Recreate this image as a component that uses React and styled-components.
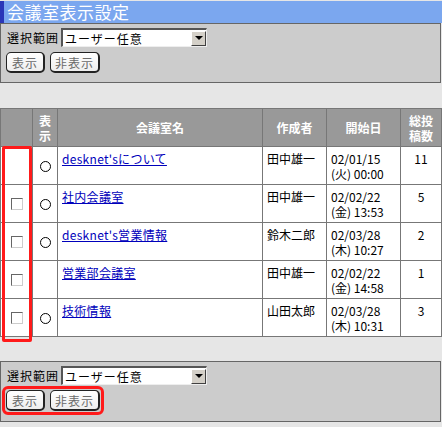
import React from "react";
import styled, { createGlobalStyle } from "styled-components";

const GlobalStyle = createGlobalStyle`
  html, body {
    margin: 0;
    padding: 0;
    background: #e6e6e6;
  }
  body {
    font-family: "Noto Sans CJK JP", "DejaVu Sans", sans-serif;
    font-size: 12px;
    color: #000;
  }
`;

const Page = styled.div`
  width: 442px;
  height: 427px;
  overflow: hidden;
  background: #e6e6e6;
`;

const TitleBar = styled.div`
  margin-top: 1px;
  height: 22px;
  display: flex;
  align-items: center;
  background: #7ba7ef;
  border-left: 4px solid #2a36b8;
  padding-left: 3px;
  color: #fff;
  font-size: 17px;
  line-height: 22px;
  letter-spacing: 0.5px;
`;

const Panel = styled.div`
  box-sizing: border-box;
  width: 441px;
  height: ${(p) => p.h}px;
  background: #cccccc;
  border: 1px solid #666;
  padding: 4px 0 0 4px;
  display: flex;
  flex-direction: column;
  gap: 5px;
`;

const Row = styled.div`
  display: flex;
  align-items: center;
  gap: 2px;
`;

const Label = styled.span`
  padding-left: 2px;
  font-size: 12px;
  letter-spacing: 1px;
`;

const SelectBox = styled.div`
  box-sizing: border-box;
  width: 146px;
  height: 19px;
  background: #fff;
  border-top: 2px solid #555;
  border-left: 2px solid #555;
  border-bottom: 1px solid #eee;
  border-right: 1px solid #eee;
  display: flex;
  align-items: center;
  justify-content: space-between;
  padding-left: 2px;
  font-size: 12px;
  letter-spacing: 1px;
`;

const Arrow = styled.span`
  box-sizing: border-box;
  width: 15px;
  height: 15px;
  background: #d4d0c8;
  border-top: 1px solid #fff;
  border-left: 1px solid #fff;
  border-bottom: 1px solid #404040;
  border-right: 1px solid #404040;
  display: flex;
  align-items: center;
  justify-content: center;
  &::after {
    content: "";
    border-left: 4px solid transparent;
    border-right: 4px solid transparent;
    border-top: 4px solid #000;
  }
`;

const Buttons = styled.div`
  display: flex;
  gap: 5px;
  align-self: flex-start;
  margin-left: 1px;
  border-radius: 2px;
  outline: ${(p) => (p.marked ? "3px solid #ff1a1a" : "none")};
  outline-offset: 1px;
`;

const Button = styled.button`
  box-sizing: border-box;
  height: 21px;
  padding: 0 4px;
  min-width: 39px;
  background: linear-gradient(#ffffff, #eeeeee);
  border: 1px solid #222;
  border-right-width: 2px;
  border-bottom-width: 2px;
  border-radius: 5px;
  font-family: inherit;
  font-size: 12px;
  color: #6a6a6a;
  letter-spacing: 1px;
  cursor: pointer;
`;

const Spacer = styled.div`
  height: ${(p) => p.h}px;
`;

const TableWrap = styled.div`
  position: relative;
  width: 441px;
`;

const Table = styled.table`
  width: 441px;
  table-layout: fixed;
  border-collapse: collapse;
  background: #fff;
`;

const Th = styled.th`
  background: #999999;
  color: #fff;
  font-weight: bold;
  font-size: 12px;
  line-height: 15px;
  height: 37px;
  border: 1px solid #777;
  text-align: center;
  padding: 0 2px;
`;

const Td = styled.td`
  border: 1px solid #777;
  height: 38px;
  box-sizing: border-box;
  padding: ${(p) => (p.mid ? "0" : p.center ? "4px 0 0 0" : "4px 0 0 4px")};
  vertical-align: ${(p) => (p.mid ? "middle" : "top")};
  text-align: ${(p) => (p.center ? "center" : "left")};
  font-size: 12px;
  line-height: 15px;
`;

const Link = styled.a`
  color: #0000bb;
  text-decoration: underline;
  letter-spacing: 0.3px;
`;

const Radio = styled.span`
  display: inline-block;
  width: 9px;
  height: 9px;
  border: 1px solid #000;
  border-radius: 50%;
  margin-top: 3px;
`;

const Check = styled.span`
  display: inline-block;
  box-sizing: border-box;
  width: 12px;
  height: 12px;
  background: #fff;
  border-top: 1px solid #666;
  border-left: 1px solid #666;
  border-bottom: 1px solid #ccc;
  border-right: 1px solid #ccc;
  margin-top: 2px;
`;

const Highlight = styled.div`
  position: absolute;
  left: 2px;
  top: 38px;
  width: 30px;
  height: 196px;
  box-sizing: border-box;
  border: 3px solid #ff1a1a;
  border-radius: 2px;
  pointer-events: none;
`;

const rooms = [
  { name: "desknet'sについて", author: "田中雄一", date: "02/01/15", time: "(火) 00:00", count: 11, check: false, radio: true },
  { name: "社内会議室", author: "田中雄一", date: "02/02/22", time: "(金) 13:53", count: 5, check: true, radio: true },
  { name: "desknet's営業情報", author: "鈴木二郎", date: "02/03/28", time: "(木) 10:27", count: 2, check: true, radio: true },
  { name: "営業部会議室", author: "田中雄一", date: "02/02/22", time: "(金) 14:58", count: 1, check: true, radio: false },
  { name: "技術情報", author: "山田太郎", date: "02/03/28", time: "(木) 10:31", count: 3, check: true, radio: true },
];

const RangeControls = ({ marked }) => (
  <>
    <Row>
      <Label>選択範囲</Label>
      <SelectBox>
        ユーザー任意
        <Arrow />
      </SelectBox>
    </Row>
    <Buttons marked={marked}>
      <Button>表示</Button>
      <Button>非表示</Button>
    </Buttons>
  </>
);

const App = () => (
  <Page>
    <GlobalStyle />
    <TitleBar>会議室表示設定</TitleBar>
    <Panel h={60}>
      <RangeControls />
    </Panel>
    <Spacer h={25} />
    <TableWrap>
      <Table>
        <colgroup>
          <col style={{ width: 32 }} />
          <col style={{ width: 25 }} />
          <col style={{ width: 205 }} />
          <col style={{ width: 64 }} />
          <col style={{ width: 74 }} />
          <col style={{ width: 41 }} />
        </colgroup>
        <thead>
          <tr>
            <Th />
            <Th>表<br />示</Th>
            <Th>会議室名</Th>
            <Th>作成者</Th>
            <Th>開始日</Th>
            <Th>総投<br />稿数</Th>
          </tr>
        </thead>
        <tbody>
          {rooms.map((r) => (
            <tr key={r.name}>
              <Td mid center>{r.check && <Check />}</Td>
              <Td mid center>{r.radio && <Radio />}</Td>
              <Td><Link href="#">{r.name}</Link></Td>
              <Td>{r.author}</Td>
              <Td>
                {r.date}
                <br />
                {r.time}
              </Td>
              <Td center>{r.count}</Td>
            </tr>
          ))}
        </tbody>
      </Table>
      <Highlight />
    </TableWrap>
    <Spacer h={24} />
    <Panel h={61}>
      <RangeControls marked />
    </Panel>
  </Page>
);

export default App;
